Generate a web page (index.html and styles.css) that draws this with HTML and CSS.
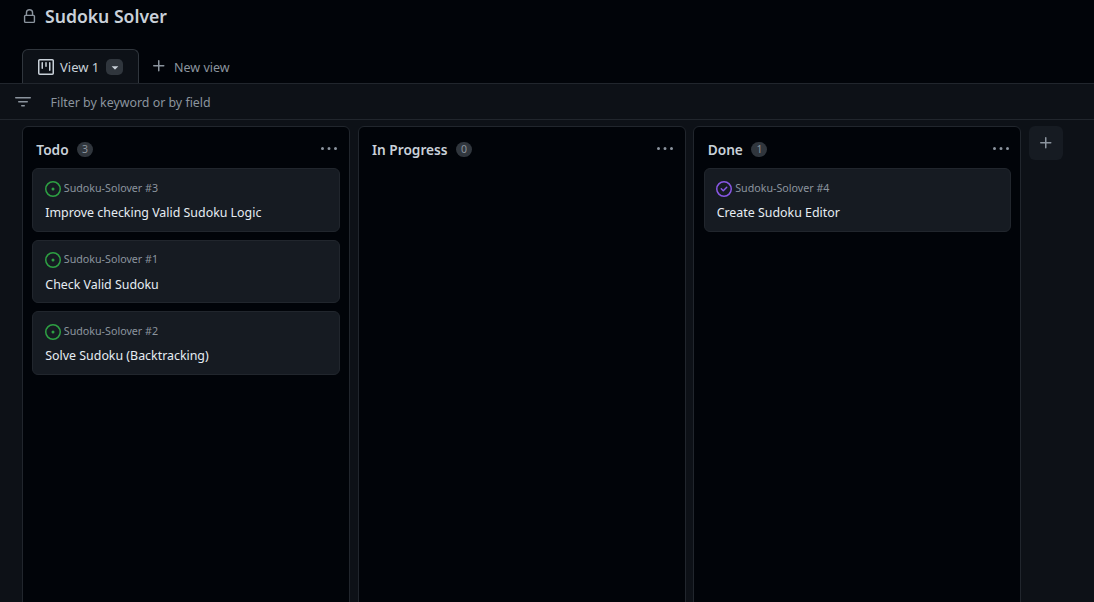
FILE: index.html
```html
<!DOCTYPE html>
<html lang="en">
<head>
<meta charset="utf-8">
<title>Sudoku Solver</title>
<link rel="stylesheet" href="styles.css">
</head>
<body>
<header class="head">
  <div class="title-row">
    <svg class="lock" width="16" height="16" viewBox="0 0 16 16"><path fill="currentColor" d="M4 4a4 4 0 0 1 8 0v2h.25c.966 0 1.75.784 1.75 1.75v5.5A1.75 1.75 0 0 1 12.25 15h-8.5A1.75 1.75 0 0 1 2 13.25v-5.5C2 6.784 2.784 6 3.75 6H4Zm8.25 3.5h-8.5a.25.25 0 0 0-.25.25v5.5c0 .138.112.25.25.25h8.5a.25.25 0 0 0 .25-.25v-5.5a.25.25 0 0 0-.25-.25ZM10.5 6V4a2.5 2.5 0 1 0-5 0v2Z"/></svg>
    <h1 class="title">Sudoku Solver</h1>
  </div>
  <div class="tabs">
    <div class="tab">
      <svg class="tab-icon" width="16" height="16" viewBox="0 0 16 16"><path fill="currentColor" d="M0 1.75C0 .784.784 0 1.75 0h12.5C15.216 0 16 .784 16 1.75v12.5A1.75 1.75 0 0 1 14.25 16H1.75A1.75 1.75 0 0 1 0 14.25ZM1.75 1.5a.25.25 0 0 0-.25.25v12.5c0 .138.112.25.25.25h12.5a.25.25 0 0 0 .25-.25V1.75a.25.25 0 0 0-.25-.25ZM11.75 3a.75.75 0 0 1 .75.75v7.5a.75.75 0 0 1-1.5 0v-7.5a.75.75 0 0 1 .75-.75Zm-8.25.75a.75.75 0 0 1 1.5 0v5.5a.75.75 0 0 1-1.5 0ZM8 3a.75.75 0 0 1 .75.75v3.5a.75.75 0 0 1-1.5 0v-3.5A.75.75 0 0 1 8 3Z"/></svg>
      <span class="tab-label">View 1</span>
      <span class="tab-caret"><svg width="16" height="16" viewBox="0 0 16 16"><path fill="currentColor" d="m4.427 7.427 3.396 3.396a.25.25 0 0 0 .354 0l3.396-3.396A.25.25 0 0 0 11.396 7H4.604a.25.25 0 0 0-.177.427Z"/></svg></span>
    </div>
    <div class="new-view">
      <svg class="plus" width="16" height="16" viewBox="0 0 16 16"><path fill="currentColor" d="M7.75 2a.75.75 0 0 1 .75.75V7h4.25a.75.75 0 0 1 0 1.5H8.5v4.25a.75.75 0 0 1-1.5 0V8.5H2.75a.75.75 0 0 1 0-1.5H7V2.75A.75.75 0 0 1 7.75 2Z"/></svg>
      <span>New view</span>
    </div>
  </div>
</header>
<div class="filter">
  <svg class="filter-icon" width="16" height="16" viewBox="0 0 16 16"><path fill="currentColor" d="M.75 3h14.5a.75.75 0 0 1 0 1.5H.75a.75.75 0 0 1 0-1.5ZM3 7.75A.75.75 0 0 1 3.75 7h8.5a.75.75 0 0 1 0 1.5h-8.5A.75.75 0 0 1 3 7.75Zm3 4a.75.75 0 0 1 .75-.75h2.5a.75.75 0 0 1 0 1.5h-2.5a.75.75 0 0 1-.75-.75Z"/></svg>
  <span class="filter-text">Filter by keyword or by field</span>
</div>
<main class="board">
  <section class="col">
    <div class="col-head"><h2 class="col-name">Todo</h2><span class="count">3</span><span class="more"><svg width="16" height="16" viewBox="0 0 16 16"><path fill="currentColor" d="M8 9a1.5 1.5 0 1 0 0-3 1.5 1.5 0 0 0 0 3ZM1.5 9a1.5 1.5 0 1 0 0-3 1.5 1.5 0 0 0 0 3Zm13 0a1.5 1.5 0 1 0 0-3 1.5 1.5 0 0 0 0 3Z"/></svg></span></div>
    <div class="cards">
      <article class="card">
        <div class="meta"><svg class="open" width="16" height="16" viewBox="0 0 16 16"><path fill="currentColor" d="M8 9.5a1.5 1.5 0 1 0 0-3 1.5 1.5 0 0 0 0 3Z"/><path fill="currentColor" d="M8 0a8 8 0 1 1 0 16A8 8 0 0 1 8 0ZM1.5 8a6.5 6.5 0 1 0 13 0 6.5 6.5 0 0 0-13 0Z"/></svg><span>Sudoku-Solover #3</span></div>
        <div class="card-title">Improve checking Valid Sudoku Logic</div>
      </article>
      <article class="card">
        <div class="meta"><svg class="open" width="16" height="16" viewBox="0 0 16 16"><path fill="currentColor" d="M8 9.5a1.5 1.5 0 1 0 0-3 1.5 1.5 0 0 0 0 3Z"/><path fill="currentColor" d="M8 0a8 8 0 1 1 0 16A8 8 0 0 1 8 0ZM1.5 8a6.5 6.5 0 1 0 13 0 6.5 6.5 0 0 0-13 0Z"/></svg><span>Sudoku-Solover #1</span></div>
        <div class="card-title">Check Valid Sudoku</div>
      </article>
      <article class="card">
        <div class="meta"><svg class="open" width="16" height="16" viewBox="0 0 16 16"><path fill="currentColor" d="M8 9.5a1.5 1.5 0 1 0 0-3 1.5 1.5 0 0 0 0 3Z"/><path fill="currentColor" d="M8 0a8 8 0 1 1 0 16A8 8 0 0 1 8 0ZM1.5 8a6.5 6.5 0 1 0 13 0 6.5 6.5 0 0 0-13 0Z"/></svg><span>Sudoku-Solover #2</span></div>
        <div class="card-title">Solve Sudoku (Backtracking)</div>
      </article>
    </div>
  </section>
  <section class="col">
    <div class="col-head"><h2 class="col-name">In Progress</h2><span class="count">0</span><span class="more"><svg width="16" height="16" viewBox="0 0 16 16"><path fill="currentColor" d="M8 9a1.5 1.5 0 1 0 0-3 1.5 1.5 0 0 0 0 3ZM1.5 9a1.5 1.5 0 1 0 0-3 1.5 1.5 0 0 0 0 3Zm13 0a1.5 1.5 0 1 0 0-3 1.5 1.5 0 0 0 0 3Z"/></svg></span></div>
    <div class="cards"></div>
  </section>
  <section class="col">
    <div class="col-head"><h2 class="col-name">Done</h2><span class="count">1</span><span class="more"><svg width="16" height="16" viewBox="0 0 16 16"><path fill="currentColor" d="M8 9a1.5 1.5 0 1 0 0-3 1.5 1.5 0 0 0 0 3ZM1.5 9a1.5 1.5 0 1 0 0-3 1.5 1.5 0 0 0 0 3Zm13 0a1.5 1.5 0 1 0 0-3 1.5 1.5 0 0 0 0 3Z"/></svg></span></div>
    <div class="cards">
      <article class="card">
        <div class="meta"><svg class="closed" width="16" height="16" viewBox="0 0 16 16"><path fill="currentColor" d="M11.28 6.78a.75.75 0 0 0-1.06-1.06L7.25 8.69 5.78 7.22a.75.75 0 0 0-1.06 1.06l2 2a.75.75 0 0 0 1.06 0l3.5-3.5Z"/><path fill="currentColor" d="M16 8A8 8 0 1 1 0 8a8 8 0 0 1 16 0Zm-1.5 0a6.5 6.5 0 1 0-13 0 6.5 6.5 0 0 0 13 0Z"/></svg><span>Sudoku-Solover #4</span></div>
        <div class="card-title">Create Sudoku Editor</div>
      </article>
    </div>
  </section>
  <div class="add"><svg width="16" height="16" viewBox="0 0 16 16"><path fill="currentColor" d="M7.75 2a.75.75 0 0 1 .75.75V7h4.25a.75.75 0 0 1 0 1.5H8.5v4.25a.75.75 0 0 1-1.5 0V8.5H2.75a.75.75 0 0 1 0-1.5H7V2.75A.75.75 0 0 1 7.75 2Z"/></svg></div>
</main>
</body>
</html>
```
FILE: styles.css
```css
* { box-sizing: border-box; }
html, body { margin: 0; height: 602px; overflow: hidden; }
body {
  background: #0d1117;
  color: #e6edf3;
  font-family: "Noto Sans", "Liberation Sans", sans-serif;
  font-size: 13px;
}
svg { display: block; flex: none; }
.head { height: 84px; background: #010409; border-bottom: 1px solid #21262d; padding-left: 22px; display: flex; flex-direction: column; }
.title-row { height: 49px; padding-bottom: 17px; display: flex; align-items: center; gap: 8px; color: #8b949e; }
.lock { width: 15px; height: 15px; margin-top: 1px; }
.title { margin: 0; font-size: 17.6px; font-weight: 600; line-height: 24px; color: #c9d1d9; }
.tabs { display: flex; height: 34px; }
.tab { width: 117px; height: 34px; background: #0d1117; border: 1px solid #30363d; border-bottom: 0; border-radius: 6px 6px 0 0; display: flex; align-items: center; padding-left: 15px; color: #c9d1d9; }
.tab-icon { color: #c9d1d9; }
.tab-label { margin-left: 6px; font-size: 13px; }
.tab-caret { margin-left: 7px; width: 17px; height: 16px; background: #30363d; border-radius: 5px; display: flex; align-items: center; justify-content: center; }
.tab-caret svg { width: 14px; height: 14px; }
.new-view { display: flex; align-items: center; gap: 8px; margin-left: 12px; padding-top: 3px; color: #8b949e; font-size: 12.5px; }
.plus { color: #8b949e; margin-top: -3px; margin-right: -1px; }
.filter { height: 36px; background: #0d1117; border-bottom: 1px solid #21262d; display: flex; align-items: center; padding-left: 15px; color: #8b949e; }
.filter-text { margin-left: 19.5px; padding-top: 2px; font-size: 12.4px; }
.board { display: flex; align-items: flex-start; padding: 6px 0 0 22px; gap: 7.7px; height: 482px; }
.col { width: 328px; height: 500px; background: #010409; border: 1px solid #21262d; border-radius: 6px; padding: 0 9.3px; flex: none; }
.col-head { height: 41px; display: flex; align-items: center; padding: 4px 2.5px 0 4px; }
.col-name { margin: 0; font-size: 13.7px; font-weight: 600; color: #c9d1d9; }
.count { margin-left: 8.5px; min-width: 16px; height: 15px; padding: 0 4px; border-radius: 8px; background: #30363d; color: #8b949e; font-size: 10.5px; line-height: 15px; text-align: center; }
.more { margin-left: auto; margin-top: -2px; color: #8b949e; }
.cards { display: flex; flex-direction: column; gap: 8px; }
.card { height: 63.5px; background: #161b22; border: 1px solid #21262d; border-radius: 6px; padding: 9px 12px 0; }
.meta { display: flex; align-items: center; gap: 3px; height: 19px; color: #8b949e; font-size: 10.7px; }
.open { color: #2ea043; margin-top: 2px; margin-left: -0.5px; }
.closed { color: #8957e5; margin-top: 2px; margin-left: -0.5px; }
.card-title { margin-top: 6px; font-size: 12.4px; line-height: 20px; color: #e6edf3; }
.add { width: 34px; height: 34px; background: #161b22; border-radius: 6px; display: flex; align-items: center; justify-content: center; color: #8b949e; }
```
